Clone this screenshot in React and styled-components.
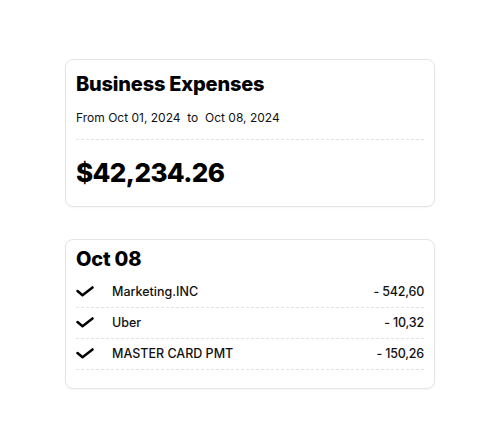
import styled, { createGlobalStyle } from "styled-components";

const GlobalStyle = createGlobalStyle`
  body {
    margin: 0;
    background: #fff;
    font-family: "Inter", "Open Sans", sans-serif;
    color: #111;
  }
`;

const Page = styled.div`
  min-height: 447px;
  display: flex;
  flex-direction: column;
  align-items: center;
  justify-content: center;
  gap: 32px;
`;

const Card = styled.section`
  box-sizing: border-box;
  width: 370px;
  padding: ${({ $top }) => $top}px 10px ${({ $bottom }) => $bottom}px;
  background: #fff;
  border: 1px solid #e4e4e4;
  border-radius: 8px;
  box-shadow: 0 1px 2px rgba(0, 0, 0, 0.04);
`;

const Title = styled.h2`
  margin: 0;
  font-size: 20px;
  line-height: 24px;
  font-weight: 800;
  letter-spacing: -0.2px;
  color: #000;
`;

const Range = styled.p`
  margin: 14px 0 0;
  font-size: 12px;
  line-height: 16px;
  font-weight: 400;
  white-space: pre;
`;

const Divider = styled.hr`
  margin: 13px 0 0;
  border: 0;
  border-top: 1px dashed #e2e2e2;
`;

const Total = styled.div`
  margin-top: 17px;
  font-size: 26px;
  line-height: 32px;
  font-weight: 800;
  letter-spacing: -0.6px;
  color: #000;
`;

const List = styled.ul`
  list-style: none;
  margin: 6px 0 0;
  padding: 0;
`;

const Row = styled.li`
  display: flex;
  align-items: center;
  height: 30px;
  border-bottom: 1px dashed #e2e2e2;
  font-size: 12.5px;
  font-weight: 500;
`;

const Check = styled.span`
  width: 36px;
  display: flex;
  align-items: center;
`;

const Payee = styled.span`
  flex: 1;
`;

const Amount = styled.span`
  text-align: right;
  letter-spacing: -0.2px;
`;

const CheckIcon = () => (
  <svg width="18" height="11" viewBox="0 0 18 11" fill="none">
    <polyline
      points="1.5,5 6.5,9.2 16.5,1.4"
      stroke="#000"
      strokeWidth="2.5"
      strokeLinecap="round"
      strokeLinejoin="round"
    />
  </svg>
);

const transactions = [
  { payee: "Marketing.INC", amount: "- 542,60" },
  { payee: "Uber", amount: "- 10,32" },
  { payee: "MASTER CARD PMT", amount: "- 150,26" },
];

export default function App() {
  return (
    <>
      <GlobalStyle />
      <Page>
        <Card $top={12} $bottom={17}>
          <Title>Business Expenses</Title>
          <Range>From Oct 01, 2024  to  Oct 08, 2024</Range>
          <Divider />
          <Total>$42,234.26</Total>
        </Card>
        <Card $top={7} $bottom={18}>
          <Title>Oct 08</Title>
          <List>
            {transactions.map((t) => (
              <Row key={t.payee}>
                <Check>
                  <CheckIcon />
                </Check>
                <Payee>{t.payee}</Payee>
                <Amount>{t.amount}</Amount>
              </Row>
            ))}
          </List>
        </Card>
      </Page>
    </>
  );
}
